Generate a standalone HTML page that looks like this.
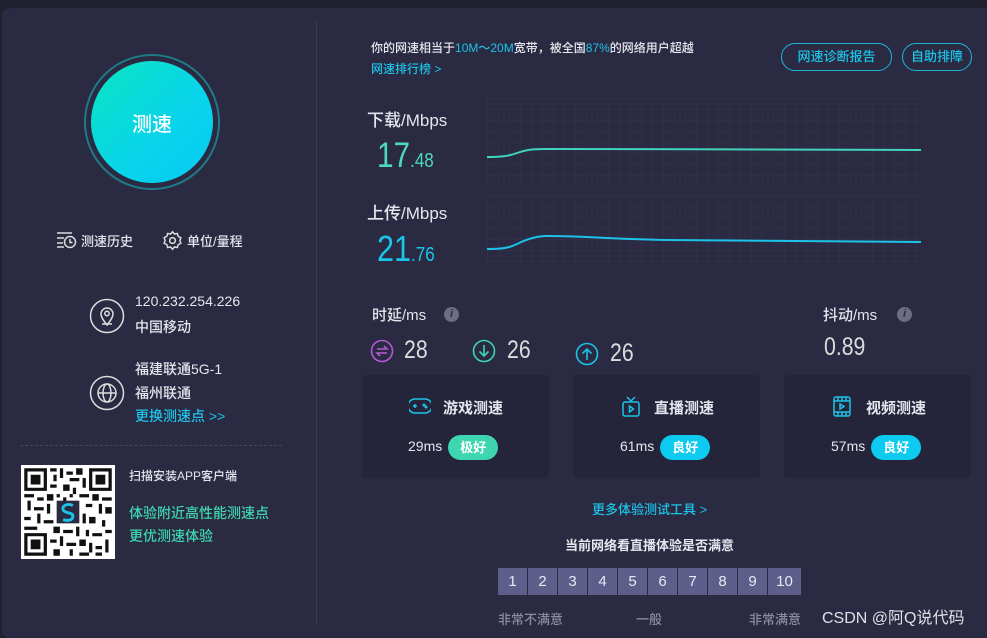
<!DOCTYPE html>
<html><head><meta charset="utf-8">
<style>
*{margin:0;padding:0;box-sizing:border-box}
body{width:987px;height:634px;background:#20202f;font-family:"Liberation Sans","Noto Sans CJK SC",sans-serif;color:#e6e6ee;position:relative;overflow:hidden}
.main{position:absolute;left:2px;top:8px;width:990px;height:630px;background:#2a2a42;border-radius:8px}
.a{position:absolute;white-space:nowrap}
.div{position:absolute;left:316px;top:20px;width:1px;height:605px;background:#3a3a55}
.cy{color:#1cc3e8}
.gr{color:#3ed6b0}
.b{font-weight:500}
.btn{position:absolute;top:43px;height:28px;border:1.5px solid #1cb6d8;border-radius:14px;color:#1cc3e8;font-size:13px;line-height:25px;text-align:center;font-weight:500}
.card{position:absolute;top:375px;width:187px;height:103px;background:#24243a;border-radius:4px}
.tag{display:inline-block;width:50px;height:25px;border-radius:13px;color:#fff;font-size:13px;font-weight:bold;line-height:25px;text-align:center;vertical-align:middle;margin-left:6px}
.num{position:absolute;top:568px;width:29px;height:27px;background:#5d5e8a;color:#e8e8f4;font-size:15px;line-height:27px;text-align:center}
.grid{position:absolute;background-image:linear-gradient(#34344e 1px,transparent 1px),linear-gradient(90deg,#34344e 1px,transparent 1px);background-size:11px 11px;opacity:.55}
.nar{display:inline-block;transform:scaleX(.85);transform-origin:left}
</style></head><body>
<div class="main"></div>
<div class="div"></div>

<div class="a" style="left:84px;top:54px;width:136px;height:136px;border-radius:50%;border:2px solid #1f7a86"></div>
<div class="a" style="left:91px;top:61px;width:122px;height:122px;border-radius:50%;background:linear-gradient(135deg,#0be3c0,#08d4ec 60%,#06c8f0)"></div>
<div class="a b" style="left:91px;top:108px;width:122px;text-align:center;font-size:20px;color:#fff">测速</div>

<svg class="a" style="left:56px;top:231px" width="22" height="18" viewBox="0 0 22 18" fill="none" stroke="#ddd" stroke-width="1.5"><path d="M1 2h15M1 7h7M1 12h6M1 16h7"/><circle cx="14" cy="11" r="5.5"/><path d="M14 8v3.5h2.5"/></svg>
<div class="a b" style="left:81px;top:231px;font-size:13px">测速历史</div>
<svg class="a" style="left:162px;top:230px" width="21" height="21" viewBox="0 0 24 24" fill="none" stroke="#ddd" stroke-width="1.7"><path d="M12 2l2.2 2.6 3.4-.6.9 3.3 3.1 1.5-1.2 3.2 1.2 3.2-3.1 1.5-.9 3.3-3.4-.6L12 22l-2.2-2.6-3.4.6-.9-3.3-3.1-1.5 1.2-3.2-1.2-3.2 3.1-1.5.9-3.3 3.4.6z"/><circle cx="12" cy="12" r="3.3"/></svg>
<div class="a b" style="left:187px;top:231px;font-size:13px">单位/量程</div>

<svg class="a" style="left:89px;top:298px" width="36" height="36" viewBox="0 0 36 36" fill="none" stroke="#ddd" stroke-width="1.5"><circle cx="18" cy="18" r="16.5"/><path d="M18 27c-4-5-6-8-6-11a6 6 0 0112 0c0 3-2 6-6 11z"/><circle cx="18" cy="15.5" r="2.2"/><path d="M13 26h10"/></svg>
<div class="a b" style="left:135px;top:293px;font-size:14px">120.232.254.226</div>
<div class="a b" style="left:135px;top:317px;font-size:14px">中国移动</div>
<svg class="a" style="left:89px;top:375px" width="36" height="36" viewBox="0 0 36 36" fill="none" stroke="#ddd" stroke-width="1.5"><circle cx="18" cy="18" r="16.5"/><circle cx="18" cy="18" r="9"/><ellipse cx="18" cy="18" rx="4" ry="9"/><path d="M9 18h18"/></svg>
<div class="a b" style="left:135px;top:359px;font-size:14px">福建联通5G-1</div>
<div class="a b" style="left:135px;top:383px;font-size:14px">福州联通</div>
<div class="a cy b" style="left:135px;top:406px;font-size:14px">更换测速点 &gt;&gt;</div>
<div class="a" style="left:20px;top:445px;width:262px;border-top:1px dashed #454560"></div>

<svg class="a" style="left:21px;top:465px" width="94" height="94" viewBox="0 0 29 29">
<rect width="29" height="29" fill="#fff"/>
<g fill="#111"><path d="M1 1h7v7H1zM21 1h7v7h-7zM1 21h7v7H1z"/></g>
<g fill="#fff"><path d="M2 2h5v5H2zM22 2h5v5h-5zM2 22h5v5H2z"/></g>
<g fill="#111"><path d="M3 3h3v3H3zM23 3h3v3h-3zM3 23h3v3H3z"/>
<path d="M9 1h2v1H9zM12 1h1v3h-1zM14 2h2v1h-2zM17 1h2v2h-2zM10 3h1v2h-1zM15 4h3v1h-3zM19 4h1v3h-1zM9 6h2v1H9zM13 6h2v2h-2zM16 7h1v2h-1zM1 9h3v1H1zM5 10h2v1H5zM2 11h1v3H2zM8 9h2v2H8zM11 9h1v1h-1zM18 9h3v1h-3zM22 9h2v2h-2zM25 10h3v1h-3zM4 13h3v1H4zM8 12h1v3H8zM20 12h2v1h-2zM24 12h1v3h-1zM26 13h2v2h-2zM1 16h2v1H1zM5 15h1v3H5zM7 17h3v1H7zM19 15h1v3h-1zM21 16h2v2h-2zM25 17h1v2h-1zM1 19h4v1H1zM10 19h2v2h-2zM13 20h3v1h-3zM17 19h1v3h-1zM20 20h1v2h-1zM22 21h3v1h-3zM26 20h2v1h-2zM9 23h2v1H9zM12 22h1v3h-1zM14 24h3v1h-3zM18 23h2v2h-2zM21 24h1v3h-1zM23 25h2v1h-2zM26 23h1v4h-1zM10 26h2v2h-2zM15 26h1v2h-1zM18 27h3v1h-3zM23 27h2v1h-2zM13 10h1v2h-1zM15 9h1v1h-1z"/></g>
<rect x="11" y="11" width="7" height="7" fill="#2a2a42"/>
<path d="M16 12.5c-1.5-.8-3.5 0-3 1.3s3 .6 3 2-2 1.5-3 1" stroke="#1cc3e8" stroke-width=".9" fill="none"/>
</svg>
<div class="a b" style="left:129px;top:467px;font-size:12px">扫描安装APP客户端</div>
<div class="a gr b" style="left:129px;top:503px;font-size:14px">体验附近高性能测速点</div>
<div class="a gr b" style="left:129px;top:526px;font-size:14px">更优测速体验</div>

<div class="a b" style="left:371px;top:39px;font-size:12px">你的网速相当于<span class="cy">10M～20M</span>宽带，被全国<span class="cy">87%</span>的网络用户超越</div>
<div class="a cy b" style="left:371px;top:60px;font-size:12px">网速排行榜 &gt;</div>
<div class="btn" style="left:781px;width:111px">网速诊断报告</div>
<div class="btn" style="left:902px;width:70px">自助排障</div>

<div class="grid" style="left:487px;top:98px;width:436px;height:86px"></div>
<div class="grid" style="left:487px;top:195px;width:436px;height:70px"></div>
<div class="a b" style="left:367px;top:106px;font-size:17px">下载/Mbps</div>
<div class="a" style="left:377px;top:136px;font-size:35px;color:#4ed9bb"><span class="nar">17<span style="font-size:20px">.48</span></span></div>
<div class="a b" style="left:367px;top:199px;font-size:17px">上传/Mbps</div>
<div class="a" style="left:377px;top:228px;font-size:36px;color:#19c6ea"><span class="nar">21<span style="font-size:20px">.76</span></span></div>
<svg class="a" style="left:480px;top:130px" width="450" height="130" fill="none" stroke-width="2">
<path d="M7 27c15 0 22-1 30-4s15-4 27-4 c120 0 320 1 377 1" stroke="#3fd4bb"/>
<path d="M7 119c15 0 22-1 30-5s18-8 30-8c40 0 60 3 120 4 100 1 200 2 254 2" stroke="#1cc3e8"/>
</svg>

<div class="a b" style="left:372px;top:304px;font-size:15px">时延/ms</div>
<div class="a" style="left:444px;top:307px;width:15px;height:15px;border-radius:50%;background:#6c6c85;color:#2a2a42;font-size:11px;font-style:italic;font-weight:bold;text-align:center;line-height:15px">i</div>
<div class="a b" style="left:823px;top:304px;font-size:15px">抖动/ms</div>
<div class="a" style="left:897px;top:307px;width:15px;height:15px;border-radius:50%;background:#6c6c85;color:#2a2a42;font-size:11px;font-style:italic;font-weight:bold;text-align:center;line-height:15px">i</div>

<svg class="a" style="left:370px;top:339px" width="24" height="24" viewBox="0 0 24 24" fill="none" stroke="#b55ad6" stroke-width="1.6"><circle cx="12" cy="12" r="10.5"/><path d="M7 10h10l-3-3M17 14H7l3 3"/></svg>
<div class="a" style="left:404px;top:336px;font-size:25px;color:#ddd"><span class="nar">28</span></div>
<svg class="a" style="left:472px;top:339px" width="24" height="24" viewBox="0 0 24 24" fill="none" stroke="#3ed6b0" stroke-width="1.6"><circle cx="12" cy="12" r="10.5"/><path d="M12 6v11M7.5 12.5L12 17l4.5-4.5"/></svg>
<div class="a" style="left:507px;top:336px;font-size:25px;color:#ddd"><span class="nar">26</span></div>
<svg class="a" style="left:575px;top:342px" width="24" height="24" viewBox="0 0 24 24" fill="none" stroke="#1cc3e8" stroke-width="1.6"><circle cx="12" cy="12" r="10.5"/><path d="M12 18V7M7.5 11.5L12 7l4.5 4.5"/></svg>
<div class="a" style="left:610px;top:339px;font-size:25px;color:#ddd"><span class="nar">26</span></div>
<div class="a" style="left:824px;top:333px;font-size:25px;color:#ddd"><span class="nar">0.89</span></div>

<div class="card" style="left:362px"></div>
<div class="card" style="left:573px"></div>
<div class="card" style="left:784px"></div>
<svg class="a" style="left:409px;top:397px" width="22" height="18" viewBox="0 0 22 18" fill="none" stroke="#1cc3e8" stroke-width="1.5"><path d="M6 2h10a5 5 0 010 14H6A5 5 0 016 2z"/><path d="M4 9h4M6 7v4"/><circle cx="15" cy="8" r=".8" fill="#1cc3e8"/><circle cx="17" cy="10" r=".8" fill="#1cc3e8"/></svg>
<div class="a" style="left:443px;top:397px;font-size:15px;font-weight:bold">游戏测速</div>
<div class="a b" style="left:408px;top:434px;font-size:14px;height:25px;line-height:25px">29ms<span class="tag" style="background:#3ed6b0">极好</span></div>
<svg class="a" style="left:622px;top:396px" width="18" height="21" viewBox="0 0 18 21" fill="none" stroke="#1cc3e8" stroke-width="1.5"><rect x="1" y="6" width="16" height="14" rx="2"/><path d="M5 1l4 4 4-4M7.5 10v6l4-3z"/></svg>
<div class="a" style="left:654px;top:397px;font-size:15px;font-weight:bold">直播测速</div>
<div class="a b" style="left:620px;top:434px;font-size:14px;height:25px;line-height:25px">61ms<span class="tag" style="background:#0ccaf0">良好</span></div>
<svg class="a" style="left:833px;top:396px" width="18" height="21" viewBox="0 0 18 21" fill="none" stroke="#1cc3e8" stroke-width="1.5"><rect x="1" y="1" width="16" height="19" rx="2"/><path d="M1 5h16M1 16h16M5 1v4M9 1v4M13 1v4M5 16v4M9 16v4M13 16v4M7 8v5l4-2.5z"/></svg>
<div class="a" style="left:866px;top:397px;font-size:15px;font-weight:bold">视频测速</div>
<div class="a b" style="left:831px;top:434px;font-size:14px;height:25px;line-height:25px">57ms<span class="tag" style="background:#0ccaf0">良好</span></div>

<div class="a cy b" style="left:592px;top:499px;font-size:13px">更多体验测试工具 &gt;</div>
<div class="a" style="left:565px;top:535px;font-size:13px;font-weight:bold">当前网络看直播体验是否满意</div>
<div class="num" style="left:498px">1</div><div class="num" style="left:528px">2</div><div class="num" style="left:558px">3</div><div class="num" style="left:588px">4</div><div class="num" style="left:618px">5</div><div class="num" style="left:648px">6</div><div class="num" style="left:678px">7</div><div class="num" style="left:708px">8</div><div class="num" style="left:738px">9</div><div class="num" style="left:768px;width:33px">10</div>
<div class="a b" style="left:498px;top:609px;font-size:13px;color:#8a8aa2">非常不满意</div>
<div class="a b" style="left:636px;top:609px;font-size:13px;color:#8a8aa2">一般</div>
<div class="a b" style="left:749px;top:609px;font-size:13px;color:#8a8aa2">非常满意</div>
<div class="a" style="left:822px;top:604px;font-size:16px;color:#e0e0e8">CSDN @阿Q说代码</div>
</body></html>
